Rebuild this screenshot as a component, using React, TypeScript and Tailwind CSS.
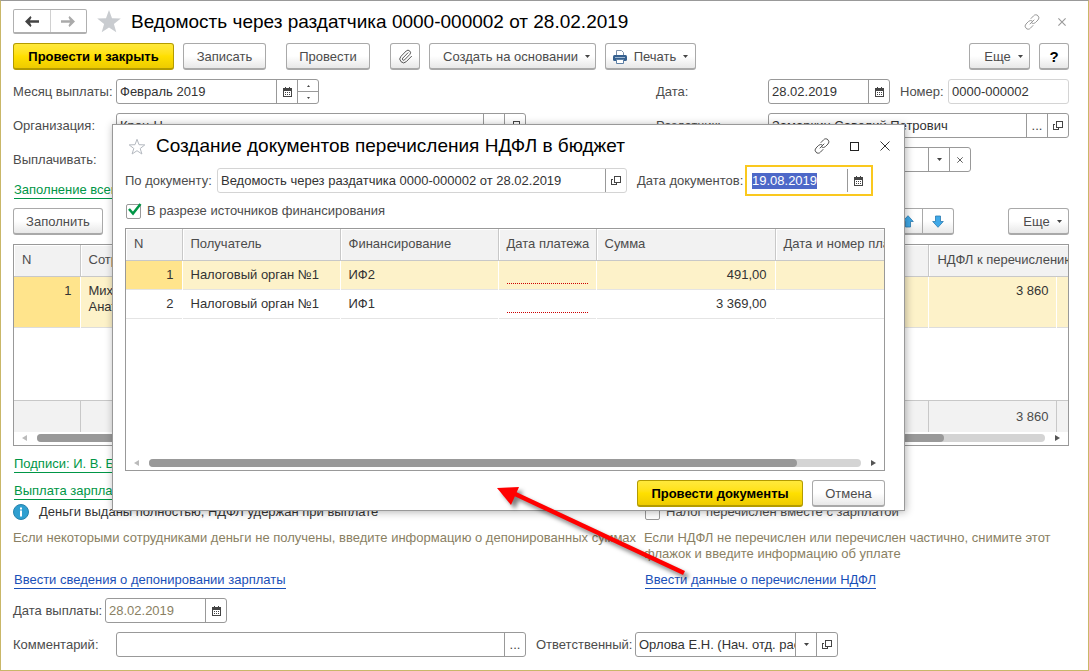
import type { ReactNode } from "react";
import clsx from "clsx";
import { Paperclip } from "lucide-react";

type ChildrenProps = {
  children?: ReactNode;
  className?: string;
};

type ButtonProps = ChildrenProps & {
  primary?: boolean;
  label?: string;
};

type FieldProps = {
  id: string;
  value: string;
  className?: string;
  muted?: boolean;
  readOnly?: boolean;
  children?: ReactNode;
};

const payments = [
  { n: 1, receiver: "Налоговый орган №1", source: "ИФ2", sum: "491,00" },
  { n: 2, receiver: "Налоговый орган №1", source: "ИФ1", sum: "3 369,00" },
];

const CalendarIcon = () => (
  <svg width="9" height="10" viewBox="0 0 9 10" shapeRendering="crispEdges">
    <path
      fill="#444"
      fillRule="evenodd"
      d="M0 1h2V0h1v1h3V0h1v1h2v9H0zM1 4v5h7V4z"
    />
    <path
      fill="#444"
      d="M2 5h1v1H2zM4 5h1v1H4zM6 5h1v1H6zM2 7h1v1H2zM4 7h1v1H4zM6 7h1v1H6z"
    />
  </svg>
);

const OpenIcon = () => (
  <svg
    width="10"
    height="10"
    viewBox="0 0 10 10"
    fill="none"
    stroke="#444"
    shapeRendering="crispEdges"
  >
    <path d="M3.500 .5h6v6h-6zM2 3.500H.5v5h5V7" />
  </svg>
);

const Caret = () => (
  <svg width="5" height="3" viewBox="0 0 5 3" fill="#444">
    <path d="M0 0h5L2.500 3z" />
  </svg>
);

const LinkIcon = ({ className }: { className?: string }) => (
  <svg
    className={className}
    width="16"
    height="16"
    viewBox="0 0 16 16"
    fill="none"
    stroke="currentColor"
    strokeLinecap="round"
  >
    <path d="M7 4.500l2.600-2.700a2.900 2.900 0 0 1 4.400 0a3 3 0 0 1 0 4.200L11.300 8.700a2.900 2.900 0 0 1-3.300 .5" />
    <path d="M9 11.500l-2.600 2.700a2.900 2.900 0 0 1-4.400 0a3 3 0 0 1 0-4.200L4.700 7.300a2.900 2.900 0 0 1 3.300-.5" />
    <path d="M6 10l4-4" />
  </svg>
);

const CloseIcon = ({ size }: { size: number }) => (
  <svg
    width={size}
    height={size}
    viewBox="0 0 10 10"
    stroke="currentColor"
    strokeWidth={size > 9 ? 1 : 1.4}
  >
    <path d="M.5 .5l9 9M9.500 .5l-9 9" />
  </svg>
);

const PrinterIcon = () => (
  <svg width="14" height="14" viewBox="0 0 14 14">
    <path d="M3.500 5V.5h5l2 2V5" fill="#fff" stroke="#7b8fa8" />
    <rect x="0" y="5" width="14" height="6" rx="1.500" fill="#35608f" />
    <path d="M2 7.500h10" stroke="#9db7d2" />
    <path d="M3.500 9.500h7v4h-7z" fill="#fff" stroke="#5c7fa5" />
  </svg>
);

const ArrowIcon = ({ className }: { className?: string }) => (
  <svg
    className={className}
    width="14"
    height="11"
    viewBox="0 0 14 11"
    fill="currentColor"
  >
    <path d="M0 5.500L5.500 0l1 1.500L5 4.200h9v2.600H5l1.500 2.700-1 1.500z" />
  </svg>
);

const MoveIcon = ({ className }: { className?: string }) => (
  <svg
    className={className}
    width="12"
    height="13"
    viewBox="0 0 12 13"
    fill="#3fa9e8"
    stroke="#2b7bb0"
    strokeWidth=".8"
  >
    <path d="M6 .7L11.300 6.500H8.500V12h-5V6.500H.7z" />
  </svg>
);

const Button = ({ children, className, primary, label }: ButtonProps) => (
  <button
    type="button"
    aria-label={label}
    className={clsx(
      "flex h-[27px] shrink-0 items-center justify-center rounded-[3px] border border-b-2 pt-px whitespace-nowrap",
      primary
        ? "border-[#b39b00] bg-linear-to-b from-[#ffe93b] via-[#ffe000] to-[#eecb00] font-bold text-black"
        : "border-[#a9a9a9] bg-linear-to-b from-white from-50% to-[#e8e8e8] text-[#4c4c4c]",
      className,
    )}
  >
    {children}
  </button>
);

const CellButton = ({
  children,
  label,
  className,
}: ChildrenProps & { label: string }) => (
  <button
    type="button"
    aria-label={label}
    className={clsx(
      "flex w-[21px] shrink-0 items-center justify-center border-l border-[#999] text-[#444]",
      className,
    )}
  >
    {children}
  </button>
);

const Field = ({
  id,
  value,
  className,
  muted,
  readOnly,
  children,
}: FieldProps) => (
  <div
    className={clsx(
      "flex h-[25px] rounded-[3px] border bg-white",
      readOnly ? "border-[#d4d4d4]" : "border-[#999]",
      className,
    )}
  >
    <input
      id={id}
      type="text"
      defaultValue={value}
      readOnly={readOnly}
      className={clsx(
        "w-full min-w-0 flex-1 pl-[3px] outline-none",
        muted ? "text-[#8a7f63]" : "text-[#333]",
      )}
    />
    {children}
  </div>
);

const TextLink = ({ children, className }: ChildrenProps) => (
  <div className="h-[18px] pt-px">
    <a
      href="#"
      className={clsx(
        "ml-px inline-block border-b border-current leading-4 whitespace-nowrap",
        className,
      )}
    >
      {children}
    </a>
  </div>
);

const ScrollBar = ({ thumb }: { thumb: string }) => (
  <div className="flex h-[14px] items-center gap-[10px] px-2">
    <svg width="5" height="6" viewBox="0 0 5 6" fill="#bbb">
      <path d="M5 0v6L0 3z" />
    </svg>
    <div className="h-2 flex-1 rounded-full bg-[#d4d4d4]">
      <div className={clsx("h-2 rounded-full bg-[#999]", thumb)} />
    </div>
    <svg width="5" height="6" viewBox="0 0 5 6" fill="#555">
      <path d="M0 0v6l5-3z" />
    </svg>
  </div>
);

const th =
  "h-[31px] overflow-hidden border-r border-b border-[#c8c8c8] bg-[#f2f2f2] pl-2 text-left font-normal whitespace-nowrap text-[#4c4c4c] shadow-[inset_1px_1px_0_#fff] last:border-r-0";

const Header = () => (
  <header className="flex h-[25px] items-center">
    <div className="flex h-[25px] w-[74px] rounded-[2px] border border-b-2 border-[#b0b0b0]">
      <button
        type="button"
        aria-label="Назад"
        className="flex flex-1 items-center justify-center text-[#444]"
      >
        <ArrowIcon />
      </button>
      <button
        type="button"
        aria-label="Вперед"
        className="flex flex-1 items-center justify-center border-l border-[#d0d0d0] text-[#aaa]"
      >
        <ArrowIcon className="rotate-180" />
      </button>
    </div>
    <svg className="ml-[10px]" width="24" height="23" viewBox="0 0 24 23">
      <path
        fill="#c9ccd0"
        d="M12 0l3 8.200 8.800.3-6.900 5.400 2.400 8.400L12 17.400l-7.300 4.900 2.400-8.400L.2 8.500 9 8.200z"
      />
    </svg>
    <h1 className="ml-[10px] text-[19px] whitespace-nowrap text-black">
      Ведомость через раздатчика 0000-000002 от 28.02.2019
    </h1>
    <div className="ml-auto flex items-center gap-[18px] text-[#999]">
      <button type="button" aria-label="Получить ссылку">
        <LinkIcon />
      </button>
      <button type="button" aria-label="Закрыть" className="mr-[3px]">
        <CloseIcon size={8} />
      </button>
    </div>
  </header>
);

const Toolbar = () => (
  <div className="flex">
    <Button primary className="w-[161px]">
      Провести и закрыть
    </Button>
    <Button className="ml-[9px] w-[83px]">Записать</Button>
    <Button className="ml-5 w-[84px]">Провести</Button>
    <Button className="ml-5 w-[30px]" label="Присоединенные файлы">
      <Paperclip size={15} strokeWidth={1.5} />
    </Button>
    <Button className="ml-[9px] w-[167px] gap-[7px] pl-2">
      Создать на основании <Caret />
    </Button>
    <Button className="ml-[9px] w-[91px] gap-[7px]">
      <PrinterIcon />
      Печать <Caret />
    </Button>
    <Button className="ml-auto w-[61px] gap-[7px] pl-2">
      Еще <Caret />
    </Button>
    <Button className="ml-[9px] w-[30px] font-bold">
      <span className="text-[15px] text-black">?</span>
    </Button>
  </div>
);

const EmployeesTable = () => (
  <div className="flex h-[202px] flex-col border border-[#999]">
    <table className="h-full w-full table-fixed border-collapse">
      <colgroup>
        <col className="w-[66px]" />
        <col />
        <col className="w-[300px]" />
        <col className="w-[128px]" />
        <col className="w-[11px]" />
      </colgroup>
      <thead>
        <tr>
          <th className={th}>N</th>
          <th className={th}>Сотрудник</th>
          <th className={th}></th>
          <th className={th} colSpan={2}>
            НДФЛ к перечислению
          </th>
        </tr>
      </thead>
      <tbody className="text-[#333]">
        <tr className="h-[51px] border-b border-[#ddd] bg-[#fdf2c9] align-top">
          <td className="border-r border-white bg-[#ffe48c] pt-[6px] pr-2 text-right">
            1
          </td>
          <td className="border-r border-white pt-[6px] pl-2">
            Михайлов
            <br />
            Анатолий
          </td>
          <td className="border-r border-white"></td>
          <td className="border-r border-white pt-[6px] pr-2 text-right">
            3 860
          </td>
          <td></td>
        </tr>
        <tr>
          <td colSpan={5}></td>
        </tr>
      </tbody>
      <tfoot>
        <tr className="h-[31px] border-t border-[#c8c8c8] bg-[#f2f2f2] text-[#4c4c4c]">
          <td className="border-r border-[#c8c8c8]"></td>
          <td className="border-r border-[#c8c8c8]"></td>
          <td className="border-r border-[#c8c8c8]"></td>
          <td className="border-r border-[#c8c8c8] pr-2 text-right">3 860</td>
          <td></td>
        </tr>
      </tfoot>
    </table>
    <ScrollBar thumb="w-[90%]" />
  </div>
);

const PaymentsDialog = () => (
  <div
    role="dialog"
    aria-labelledby="dialog-title"
    className="absolute top-[123px] left-[111px] flex h-[387px] w-[793px] flex-col border border-[#999] bg-white pr-[19px] pl-3 shadow-[1px_1px_8px_rgba(0,0,0,0.3)]"
  >
    <div className="mt-2 flex h-[26px] items-center">
      <svg
        className="ml-[3px]"
        width="18"
        height="17"
        viewBox="0 0 18 17"
        fill="none"
        stroke="#b4b9c0"
      >
        <path d="M9 1.300l2 5.400 5.800.2-4.600 3.600 1.700 5.500L9 12.700 4.100 16l1.700-5.500L1.200 6.900 7 6.700z" />
      </svg>
      <h2
        id="dialog-title"
        className="ml-[10px] text-[19px] whitespace-nowrap text-black"
      >
        Создание документов перечисления НДФЛ в бюджет
      </h2>
      <div className="-mr-[5px] ml-auto flex items-center text-[#333]">
        <button type="button" aria-label="Получить ссылку">
          <LinkIcon className="text-[#555]" />
        </button>
        <button
          type="button"
          aria-label="Развернуть"
          className="ml-5 size-[9px] border border-[#222]"
        ></button>
        <button type="button" aria-label="Закрыть" className="ml-[21px]">
          <CloseIcon size={10} />
        </button>
      </div>
    </div>
    <div className="mt-[6px] flex h-[31px] items-center">
      <label htmlFor="source-doc" className="w-[92px] shrink-0">
        По документу:
      </label>
      <Field
        id="source-doc"
        value="Ведомость через раздатчика 0000-000002 от 28.02.2019"
        readOnly
        className="w-[410px] shrink-0"
      >
        <CellButton label="Открыть">
          <OpenIcon />
        </CellButton>
      </Field>
      <label htmlFor="docs-date" className="ml-[10px] whitespace-nowrap">
        Дата документов:
      </label>
      <div className="mr-3 ml-auto flex h-[31px] w-[128px] shrink-0 items-center border-2 border-[#fac81e] pl-[5px]">
        <input
          id="docs-date"
          type="text"
          defaultValue="19.08.2019"
          className="h-4 w-[65px] bg-[#4d68c8] text-white outline-none"
        />
        <CellButton label="Выбрать дату" className="ml-auto h-[23px]">
          <CalendarIcon />
        </CellButton>
        <span className="w-[3px]"></span>
      </div>
    </div>
    <div className="mt-[6px] flex h-[18px] items-center">
      <span className="relative flex">
        <input
          id="by-source"
          type="checkbox"
          defaultChecked
          className="ml-px size-[15px] appearance-none rounded-[2px] border border-[#999] bg-white"
        />
        <svg
          className="pointer-events-none absolute -top-px left-[3px]"
          width="14"
          height="13"
          viewBox="0 0 14 13"
          fill="none"
          stroke="#009646"
          strokeWidth="2.500"
        >
          <path d="M1 6l4 4.500L12.500 1" />
        </svg>
      </span>
      <label htmlFor="by-source" className="ml-[6px]">
        В разрезе источников финансирования
      </label>
    </div>
    <div className="mt-2 flex flex-1 flex-col justify-between overflow-hidden border border-[#999]">
      <table className="w-full table-fixed border-collapse">
        <colgroup>
          <col className="w-[56px]" />
          <col className="w-[158px]" />
          <col className="w-[158px]" />
          <col className="w-[98px]" />
          <col className="w-[179px]" />
          <col />
        </colgroup>
        <thead>
          <tr>
            <th className={th}>N</th>
            <th className={th}>Получатель</th>
            <th className={th}>Финансирование</th>
            <th className={th}>Дата платежа</th>
            <th className={th}>Сумма</th>
            <th className={th}>Дата и номер платежного поручения</th>
          </tr>
        </thead>
        <tbody className="text-[#333]">
          {payments.map((row) => (
            <tr
              key={row.n}
              className={clsx(
                "h-[29px] border-b border-[#e4e4e4]",
                row.n === 1 && "bg-[#fdf2c9]",
              )}
            >
              <td
                className={clsx(
                  "border-r border-white pr-2 text-right",
                  row.n === 1 && "bg-[#ffe48c]",
                )}
              >
                {row.n}
              </td>
              <td className="border-r border-white pl-2">{row.receiver}</td>
              <td className="border-r border-white pl-2">{row.source}</td>
              <td className="border-r border-white px-2">
                <div className="h-[18px] border-b border-dotted border-[#c00]"></div>
              </td>
              <td className="border-r border-white pr-2 text-right">
                {row.sum}
              </td>
              <td></td>
            </tr>
          ))}
        </tbody>
      </table>
      <ScrollBar thumb="w-[91%]" />
    </div>
    <div className="mt-[9px] mb-[3px] flex justify-end gap-[9px]">
      <Button primary className="w-[166px]">
        Провести документы
      </Button>
      <Button className="w-[73px]">Отмена</Button>
    </div>
  </div>
);

const App = () => {
  return (
    <div className="relative flex min-h-screen flex-col gap-[9px] border border-[#c9b768] border-t-[#999] bg-white pt-2 pr-[19px] pb-3 pl-3 font-['Liberation_Sans',Arial,sans-serif] text-[13px] leading-4 text-[#4c4c4c]">
      <Header />
      <Toolbar />

      <div className="flex items-center">
        <label htmlFor="month" className="w-[103px]">
          Месяц выплаты:
        </label>
        <Field id="month" value="Февраль 2019" className="w-[203px]">
          <CellButton label="Выбрать месяц">
            <CalendarIcon />
          </CellButton>
          <div className="flex w-[21px] flex-col border-l border-[#999]">
            <button
              type="button"
              aria-label="Следующий месяц"
              className="flex flex-1 items-center justify-center border-b border-[#999]"
            >
              <svg width="3" height="2" viewBox="0 0 3 2" fill="#444">
                <path d="M0 2h3L1.500 0z" />
              </svg>
            </button>
            <button
              type="button"
              aria-label="Предыдущий месяц"
              className="flex flex-1 items-center justify-center"
            >
              <svg width="3" height="2" viewBox="0 0 3 2" fill="#444">
                <path d="M0 0h3L1.500 2z" />
              </svg>
            </button>
          </div>
        </Field>
        <div className="ml-auto flex w-[413px] items-center">
          <label htmlFor="date" className="w-[112px]">
            Дата:
          </label>
          <Field id="date" value="28.02.2019" className="w-[122px]">
            <CellButton label="Выбрать дату">
              <CalendarIcon />
            </CellButton>
          </Field>
          <label htmlFor="number" className="ml-[10px]">
            Номер:
          </label>
          <Field
            id="number"
            value="0000-000002"
            readOnly
            className="ml-auto w-[121px]"
          />
        </div>
      </div>

      <div className="flex items-center">
        <label htmlFor="org" className="w-[103px]">
          Организация:
        </label>
        <Field id="org" value="Крон-Ц" className="w-[410px]">
          <CellButton label="Выбрать">...</CellButton>
          <CellButton label="Открыть">
            <OpenIcon />
          </CellButton>
        </Field>
        <div className="ml-auto flex w-[413px] items-center">
          <label htmlFor="payer" className="w-[112px]">
            Раздатчик:
          </label>
          <Field
            id="payer"
            value="Замаркин Савелий Петрович"
            className="flex-1"
          >
            <CellButton label="Выбрать">...</CellButton>
            <CellButton label="Открыть">
              <OpenIcon />
            </CellButton>
          </Field>
        </div>
      </div>

      <div className="flex items-center">
        <label htmlFor="pay-kind" className="w-[103px]">
          Выплачивать:
        </label>
        <div className="ml-auto flex w-[413px] pl-[112px]">
          <Field id="pay-kind" value="" className="w-[203px]">
            <CellButton label="Выбрать из списка">
              <Caret />
            </CellButton>
            <CellButton label="Очистить">
              <CloseIcon size={6} />
            </CellButton>
          </Field>
        </div>
      </div>

      <TextLink className="text-[#009646]">Заполнение всего</TextLink>

      <div className="flex">
        <Button className="w-[90px]">Заполнить</Button>
        <Button className="ml-auto w-[31px] rounded-r-none" label="Вверх">
          <MoveIcon />
        </Button>
        <Button className="w-[31px] rounded-l-none border-l-0" label="Вниз">
          <MoveIcon className="rotate-180" />
        </Button>
        <Button className="ml-[54px] w-[61px] gap-[7px] pl-2">
          Еще <Caret />
        </Button>
      </div>

      <EmployeesTable />

      <TextLink className="text-[#009646]">Подписи: И. В. Бойко</TextLink>
      <TextLink className="text-[#009646]">Выплата зарплаты</TextLink>

      <div className="-mt-[6px] grid grid-cols-[1fr_425px] gap-y-[9px]">
        <div className="flex h-[18px] items-center gap-[10px] text-[#333]">
          <svg width="16" height="16" viewBox="0 0 16 16">
            <circle cx="8" cy="8" r="7.500" fill="#2f9fd0" stroke="#2783ac" />
            <path d="M7 3.500h2v2H7zM7 6.500h2v6H7z" fill="#fff" />
          </svg>
          Деньги выданы полностью, НДФЛ удержан при выплате
        </div>
        <label className="flex h-[18px] items-center gap-[6px]">
          <input
            type="checkbox"
            className="ml-px size-[15px] appearance-none rounded-[2px] border border-[#999] bg-white"
          />
          Налог перечислен вместе с зарплатой
        </label>
        <p className="whitespace-nowrap text-[#8a7f63]">
          Если некоторыми сотрудниками деньги не получены, введите информацию о
          депонированных суммах
        </p>
        <p className="text-[#8a7f63]">
          Если НДФЛ не перечислен или перечислен частично, снимите этот флажок и
          введите информацию об уплате
        </p>
        <TextLink className="text-[#1a50b8]">
          Ввести сведения о депонировании зарплаты
        </TextLink>
        <TextLink className="text-[#1a50b8]">
          Ввести данные о перечислении НДФЛ
        </TextLink>
      </div>

      <div className="flex items-center">
        <label htmlFor="pay-date" className="w-[92px] whitespace-nowrap">
          Дата выплаты:
        </label>
        <Field id="pay-date" value="28.02.2019" muted className="w-[122px]">
          <CellButton label="Выбрать дату">
            <CalendarIcon />
          </CellButton>
        </Field>
      </div>

      <div className="flex items-center">
        <label htmlFor="comment" className="w-[103px]">
          Комментарий:
        </label>
        <Field id="comment" value="" className="w-[410px]">
          <CellButton label="Открыть комментарий">...</CellButton>
        </Field>
        <label htmlFor="responsible" className="ml-[10px] w-[99px]">
          Ответственный:
        </label>
        <Field
          id="responsible"
          value="Орлова Е.Н. (Нач. отд. расчета)"
          className="w-[203px]"
        >
          <CellButton label="Выбрать из списка">
            <Caret />
          </CellButton>
          <CellButton label="Открыть">
            <OpenIcon />
          </CellButton>
        </Field>
      </div>

      <PaymentsDialog />

      {/* pointer from the link to the dialog it opens */}
      <svg
        className="pointer-events-none absolute top-[480px] left-[490px] drop-shadow-[4px_4px_2px_rgba(0,0,0,0.5)]"
        width="206"
        height="104"
        viewBox="0 0 206 104"
      >
        <path d="M22 12l171 80" stroke="#f00" strokeWidth="4.500" />
        <path d="M6 7l22-1-8 18z" fill="#f00" />
      </svg>
    </div>
  );
};

export default App;
